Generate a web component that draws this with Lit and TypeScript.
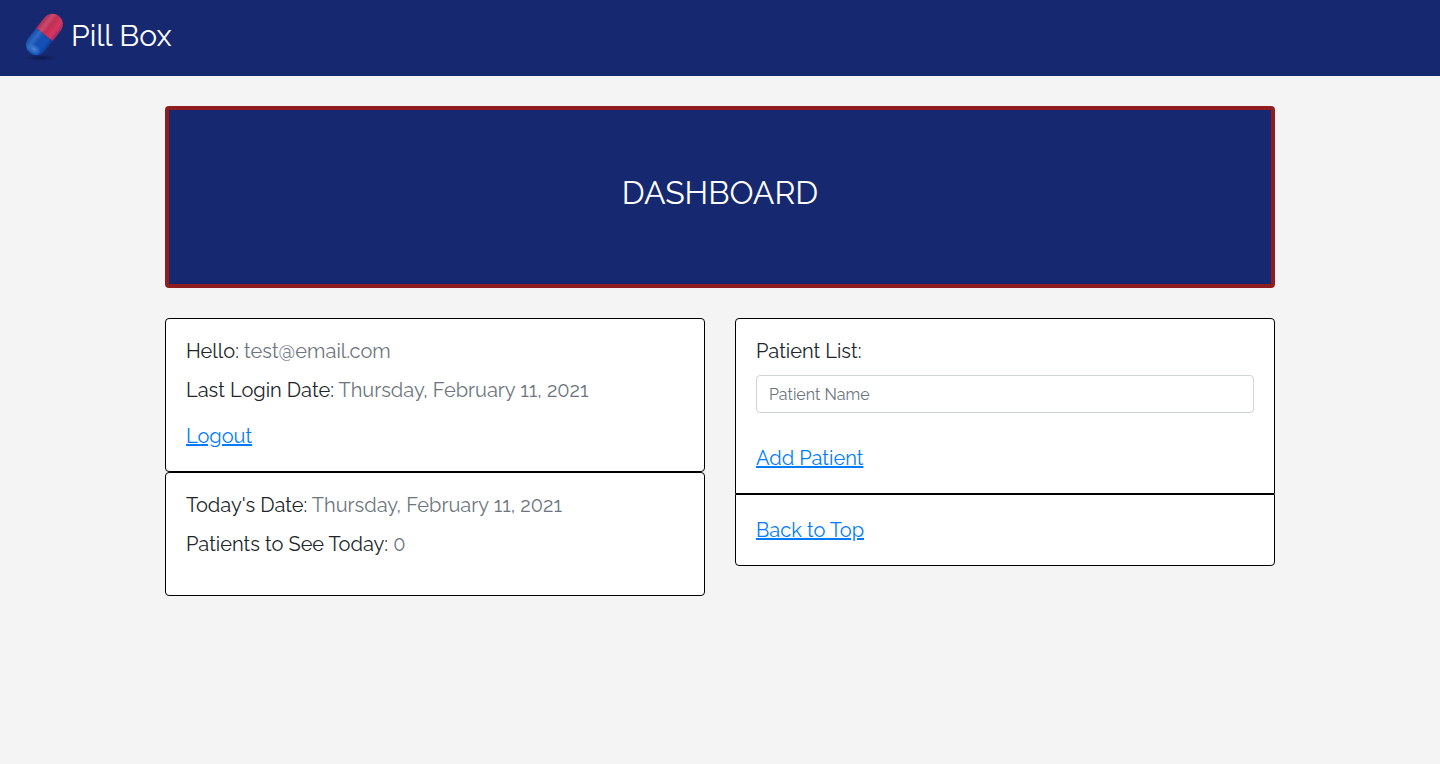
import { LitElement, html, css } from "lit";
import { customElement, property, state } from "lit/decorators.js";

@customElement("pill-logo")
export class PillLogo extends LitElement {
  static styles = css`
    :host {
      display: block;
      flex: none;
    }
    .pill {
      display: block;
      width: 51px;
      height: 60px;
    }
  `;

  render() {
    return html`
      <svg class="pill" viewBox="0 0 51 60" aria-hidden="true">
        <defs>
          <linearGradient id="red" x1="0" y1="0" x2="0" y2="1">
            <stop offset="0" stop-color="#a82c58" />
            <stop offset="0.25" stop-color="#cb4a6c" />
            <stop offset="0.45" stop-color="#c03054" />
            <stop offset="0.78" stop-color="#d63462" />
            <stop offset="1" stop-color="#a02a5c" />
          </linearGradient>
          <linearGradient id="blue" x1="0" y1="0" x2="0" y2="1">
            <stop offset="0" stop-color="#1a4ba6" />
            <stop offset="0.25" stop-color="#2c69c4" />
            <stop offset="0.48" stop-color="#174fb0" />
            <stop offset="0.8" stop-color="#1250b8" />
            <stop offset="1" stop-color="#12398f" />
          </linearGradient>
          <radialGradient id="glow">
            <stop offset="0" stop-color="#5e9ce6" stop-opacity="0.7" />
            <stop offset="1" stop-color="#5e9ce6" stop-opacity="0" />
          </radialGradient>
          <radialGradient id="shade">
            <stop offset="0" stop-color="#0b1748" stop-opacity="0.85" />
            <stop offset="1" stop-color="#0b1748" stop-opacity="0" />
          </radialGradient>
        </defs>
        <ellipse cx="21" cy="53" rx="17" ry="3" fill="url(#shade)" />
        <g transform="translate(24.5 29.5) rotate(-52)">
          <path d="M0 -10.5 H-13 A10.5 10.5 0 0 0 -13 10.5 H0 Z" fill="url(#blue)" />
          <path d="M0 -10.5 H13 A10.5 10.5 0 0 1 13 10.5 H0 Z" fill="url(#red)" />
          <ellipse cx="-18" cy="1" rx="5" ry="7" fill="url(#glow)" />
        </g>
      </svg>
    `;
  }
}

@customElement("app-root")
export class AppRoot extends LitElement {
  @property() email = "test@email.com";
  @property() today = "Thursday, February 11, 2021";
  @property({ type: Number }) patientsToday = 0;
  @state() private patientName = "";

  static styles = css`
    :host {
      display: block;
      min-height: 100vh;
      background: #f4f4f4;
      color: #212529;
      font-family: Raleway, Lato, "Open Sans", sans-serif;
      font-size: 20px;
      line-height: 24px;
    }
    *,
    *::before,
    *::after {
      box-sizing: border-box;
    }
    .navbar {
      display: flex;
      align-items: flex-start;
      padding: 5px 20px 9px;
      background: #16286f;
    }
    .brand {
      display: flex;
      color: #fff;
      font-size: 30px;
      line-height: 62px;
      text-decoration: none;
    }
    .container {
      max-width: 1140px;
      margin: 0 auto;
      padding: 30px 15px;
    }
    .hero {
      margin-bottom: 30px;
      padding: 64px 32px;
      border: 4px solid #8f1d1d;
      border-radius: 4px;
      background: #16286f;
      color: #fff;
      text-align: center;
    }
    .title {
      margin: 0 0 8px;
      font-size: 32px;
      font-weight: 400;
      line-height: 38px;
    }
    .columns {
      display: grid;
      grid-template-columns: 1fr 1fr;
      align-items: start;
      gap: 30px;
    }
    .card {
      padding: 20px;
      border: 1px solid #000;
      border-radius: 4px;
      background: #fff;
    }
    .joined-top {
      border-bottom-left-radius: 0;
      border-bottom-right-radius: 0;
    }
    .joined-bottom {
      border-top-left-radius: 0;
      border-top-right-radius: 0;
    }
    .facts {
      display: grid;
      gap: 15px;
      padding-bottom: 19px;
    }
    .fact {
      margin: 0;
    }
    .value {
      color: #6c757d;
    }
    .link {
      display: table;
      color: #007bff;
      line-height: 30px;
      text-decoration: underline;
    }
    .label {
      display: block;
      margin-bottom: 12px;
    }
    .input {
      display: block;
      width: 100%;
      margin-bottom: 30px;
      padding: 6px 12px;
      border: 1px solid #ced4da;
      border-radius: 4px;
      background: #fff;
      color: #495057;
      font-family: inherit;
      font-size: 16px;
      line-height: 24px;
      height: 38px;
    }
    .input::placeholder {
      color: #6c757d;
      opacity: 1;
    }
    @media (max-width: 767px) {
      .columns {
        grid-template-columns: 1fr;
      }
    }
  `;

  private onName(e: Event) {
    this.patientName = (e.target as HTMLInputElement).value;
  }

  private fact(label: string, value: string | number) {
    return html`<p class="fact">${label}: <span class="value">${value}</span></p>`;
  }

  render() {
    return html`
      <header class="navbar">
        <a class="brand" href="#"><pill-logo></pill-logo>Pill Box</a>
      </header>
      <main class="container">
        <section class="hero"><h1 class="title">DASHBOARD</h1></section>
        <div class="columns">
          <div>
            <section class="card">
              <div class="facts">
                ${this.fact("Hello", this.email)}
                ${this.fact("Last Login Date", this.today)}
              </div>
              <a class="link" href="#logout">Logout</a>
            </section>
            <section class="card">
              <div class="facts">
                ${this.fact("Today's Date", this.today)}
                ${this.fact("Patients to See Today", this.patientsToday)}
              </div>
            </section>
          </div>
          <div>
            <section class="card joined-top">
              <label class="label" for="patient">Patient List:</label>
              <input
                class="input"
                id="patient"
                type="text"
                placeholder="Patient Name"
                .value=${this.patientName}
                @input=${this.onName}
              />
              <a class="link" href="#add">Add Patient</a>
            </section>
            <section class="card joined-bottom">
              <a class="link" href="#top">Back to Top</a>
            </section>
          </div>
        </div>
      </main>
    `;
  }
}
